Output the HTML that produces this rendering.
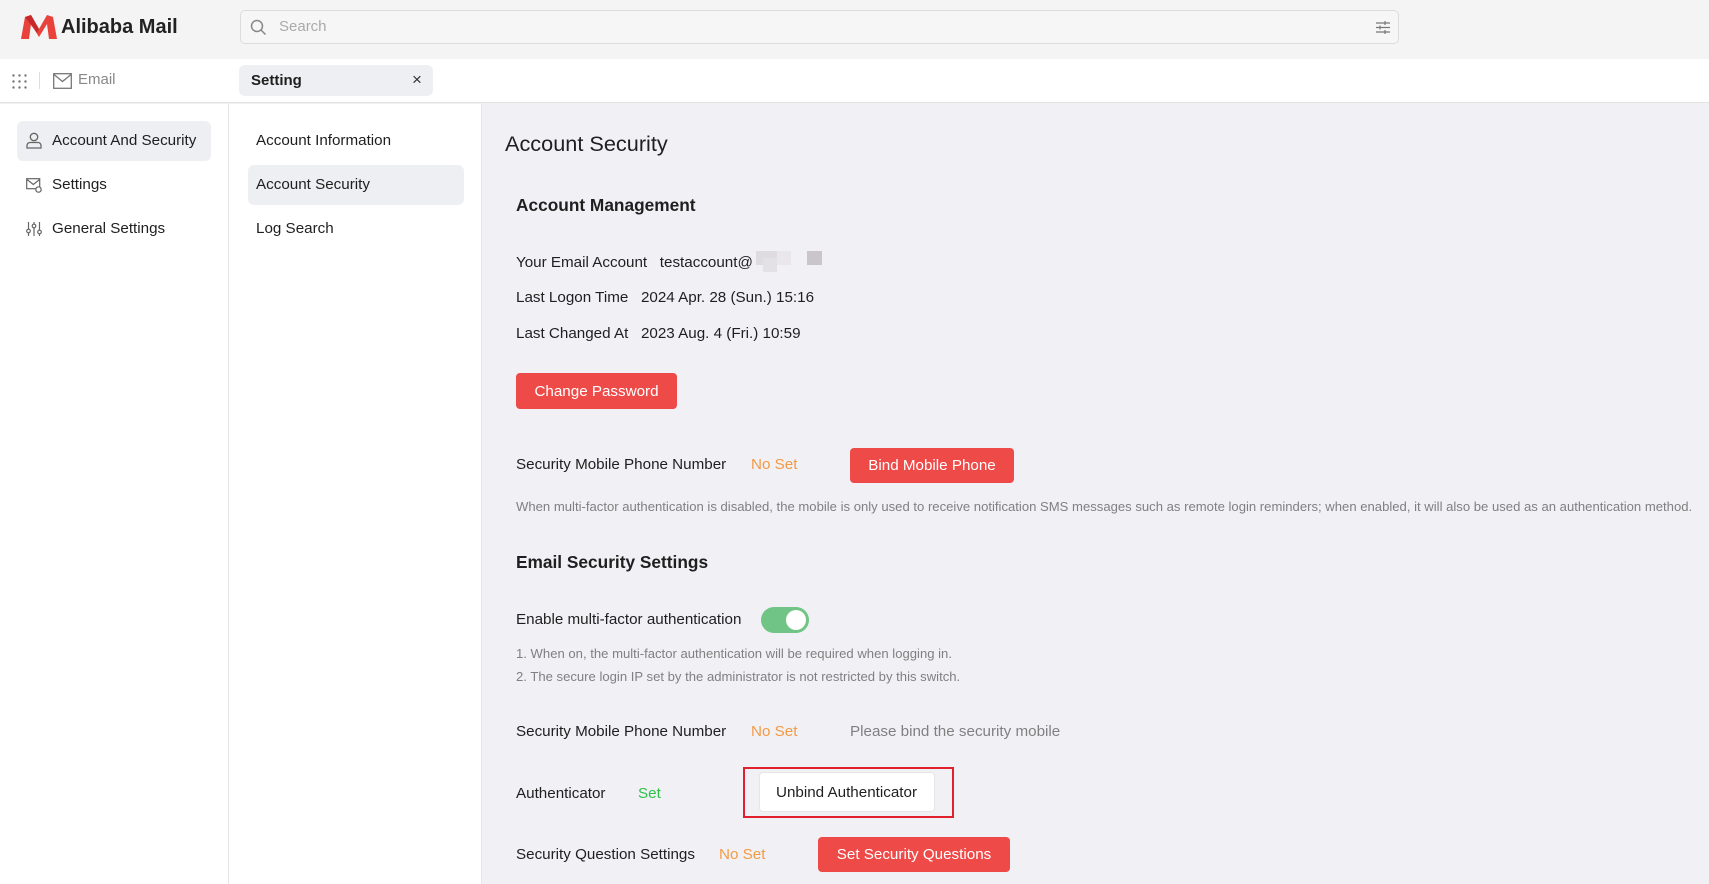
<!DOCTYPE html>
<html><head><meta charset="utf-8"><style>
*{box-sizing:border-box;margin:0;padding:0}
body{width:1709px;height:884px;overflow:hidden;font-family:"Liberation Sans",Arial,sans-serif;color:#1f1f1f;background:#f1f0f5;position:relative}
.a{position:absolute;white-space:nowrap}
.hdr{left:0;top:0;width:1709px;height:59px;background:#f4f4f4}
.tabs{left:0;top:59px;width:1709px;height:44px;background:#fff;border-bottom:1px solid #e3e3e3}
.side{left:0;top:104px;width:229px;height:780px;background:#fff;border-right:1px solid #e6e6e6}
.side2{left:229px;top:104px;width:253px;height:780px;background:#fff;border-right:1px solid #e6e6e6}
.t15{font-size:15.2px}
.btn{position:absolute;background:#ee4a48;color:#fff;font-size:15.2px;border-radius:4px;display:flex;align-items:center;justify-content:center;white-space:nowrap}
.or{color:#f39a45}
.gr{color:#808080}
</style></head><body>
<div class="a hdr"></div>
<svg class="a" style="left:21px;top:15px" width="36" height="25" viewBox="0 0 36 25"><path d="M0 24 L4 2 L10 0 L18 14 L26 0 L32 2 L36 24 L28 24 L26 9 L18 22 L10 9 L8 24 Z" fill="#e8423b"/><path d="M4 2 L10 0 L18 14 L16 18 Z" fill="#c8282a"/></svg>
<div class="a" style="left:61px;top:16px;font-size:20px;font-weight:bold;color:#222">Alibaba Mail</div>
<div class="a" style="left:240px;top:10px;width:1159px;height:34px;border:1px solid #dcdcdc;border-radius:5px;background:#f6f6f6"></div>
<svg class="a" style="left:250px;top:19px" width="17" height="17" viewBox="0 0 17 17"><circle cx="7" cy="7" r="5.5" fill="none" stroke="#888" stroke-width="1.5"/><path d="M11 11l4.5 4.5" stroke="#888" stroke-width="1.5"/></svg>
<div class="a" style="left:279px;top:18px;font-size:15px;color:#aaa">Search</div>
<svg class="a" style="left:1375px;top:20px" width="16" height="15" viewBox="0 0 16 15"><path d="M1 3h14M1 7.5h14M1 12h14M10 1v4M5 5.5v4M10 10v4" stroke="#777" stroke-width="1.2"/></svg>
<div class="a tabs"></div>
<svg class="a" style="left:12px;top:74px" width="15" height="15" viewBox="0 0 15 15" fill="#777"><circle cx="1.5" cy="1.5" r="1.2"/><circle cx="7.5" cy="1.5" r="1.2"/><circle cx="13.5" cy="1.5" r="1.2"/><circle cx="1.5" cy="7.5" r="1.2"/><circle cx="7.5" cy="7.5" r="1.2"/><circle cx="13.5" cy="7.5" r="1.2"/><circle cx="1.5" cy="13.5" r="1.2"/><circle cx="7.5" cy="13.5" r="1.2"/><circle cx="13.5" cy="13.5" r="1.2"/></svg>
<div class="a" style="left:39px;top:72px;width:1px;height:17px;background:#ddd"></div>
<svg class="a" style="left:53px;top:73px" width="19" height="16" viewBox="0 0 19 16"><rect x="0.7" y="0.7" width="17.6" height="14.6" fill="none" stroke="#777" stroke-width="1.3"/><path d="M1 1.5l8.5 7 8.5-7" fill="none" stroke="#777" stroke-width="1.3"/></svg>
<div class="a" style="left:78px;top:71px;font-size:15px;color:#888">Email</div>
<div class="a" style="left:239px;top:65px;width:194px;height:31px;background:#eeeff2;border-radius:6px"></div>
<div class="a" style="left:251px;top:72px;font-size:15px;font-weight:bold">Setting</div>
<div class="a" style="left:412px;top:70px;font-size:17px;color:#333">×</div>
<div class="a side"></div>
<div class="a side2"></div>
<div class="a" style="left:17px;top:121px;width:194px;height:40px;background:#eeeff2;border-radius:6px"></div>
<svg class="a" style="left:26px;top:132px" width="16" height="17" viewBox="0 0 16 17"><circle cx="8" cy="5" r="3.7" fill="none" stroke="#666" stroke-width="1.3"/><path d="M1 16v-2.5a3 3 0 0 1 3-3h8a3 3 0 0 1 3 3V16z" fill="none" stroke="#666" stroke-width="1.3"/></svg>
<div class="a t15" style="left:52px;top:132px">Account And Security</div>
<svg class="a" style="left:26px;top:178px" width="16" height="15" viewBox="0 0 16 15"><rect x="0.7" y="0.7" width="13" height="10" fill="none" stroke="#666" stroke-width="1.2"/><path d="M1 1.5l6.3 5 6.3-5" fill="none" stroke="#666" stroke-width="1.2"/><circle cx="12.5" cy="11.5" r="2.7" fill="#fff" stroke="#666" stroke-width="1.2"/></svg>
<div class="a t15" style="left:52px;top:176px">Settings</div>
<svg class="a" style="left:26px;top:221px" width="16" height="16" viewBox="0 0 16 16"><path d="M2.5 1v14M8 1v14M13.5 1v14" stroke="#666" stroke-width="1.2"/><circle cx="2.5" cy="10" r="1.8" fill="#fff" stroke="#666" stroke-width="1.2"/><circle cx="8" cy="5" r="1.8" fill="#fff" stroke="#666" stroke-width="1.2"/><circle cx="13.5" cy="11" r="1.8" fill="#fff" stroke="#666" stroke-width="1.2"/></svg>
<div class="a t15" style="left:52px;top:220px">General Settings</div>
<div class="a t15" style="left:256px;top:132px">Account Information</div>
<div class="a" style="left:248px;top:165px;width:216px;height:40px;background:#eeeff2;border-radius:6px"></div>
<div class="a t15" style="left:256px;top:176px">Account Security</div>
<div class="a t15" style="left:256px;top:220px">Log Search</div>

<div class="a" style="left:505px;top:131px;font-size:21.7px">Account Security</div>
<div class="a" style="left:516px;top:195px;font-size:17.3px;font-weight:bold">Account Management</div>
<div class="a t15" style="left:516px;top:254px">Your Email Account&nbsp;&nbsp; testaccount@</div>
<div class="a" style="left:756px;top:251px;width:21px;height:14px;background:#dedbe1"></div>
<div class="a" style="left:763px;top:258px;width:14px;height:14px;background:#e3e0e6"></div>
<div class="a" style="left:777px;top:251px;width:14px;height:14px;background:#e9e7ec"></div>
<div class="a" style="left:807px;top:251px;width:15px;height:14px;background:#c9c5cb"></div>
<div class="a t15" style="left:516px;top:289px">Last Logon Time&nbsp;&nbsp; 2024 Apr. 28 (Sun.) 15:16</div>
<div class="a t15" style="left:516px;top:325px">Last Changed At&nbsp;&nbsp; 2023 Aug. 4 (Fri.) 10:59</div>
<div class="btn" style="left:516px;top:373px;width:161px;height:36px">Change Password</div>
<div class="a t15" style="left:516px;top:456px">Security Mobile Phone Number</div>
<div class="a t15 or" style="left:751px;top:456px">No Set</div>
<div class="btn" style="left:850px;top:448px;width:164px;height:35px">Bind Mobile Phone</div>
<div class="a gr" style="left:516px;top:499px;font-size:13.1px">When multi-factor authentication is disabled, the mobile is only used to receive notification SMS messages such as remote login reminders; when enabled, it will also be used as an authentication method.</div>
<div class="a" style="left:516px;top:552px;font-size:17.3px;font-weight:bold">Email Security Settings</div>
<div class="a t15" style="left:516px;top:611px">Enable multi-factor authentication</div>
<div class="a" style="left:761px;top:607px;width:48px;height:26px;background:#6fc486;border-radius:13px"></div>
<div class="a" style="left:786px;top:610px;width:20px;height:20px;background:#fff;border-radius:50%"></div>
<div class="a gr" style="left:516px;top:646px;font-size:13.1px">1. When on, the multi-factor authentication will be required when logging in.</div>
<div class="a gr" style="left:516px;top:669px;font-size:13.1px">2. The secure login IP set by the administrator is not restricted by this switch.</div>
<div class="a t15" style="left:516px;top:723px">Security Mobile Phone Number</div>
<div class="a t15 or" style="left:751px;top:723px">No Set</div>
<div class="a t15 gr" style="left:850px;top:723px">Please bind the security mobile</div>
<div class="a t15" style="left:516px;top:785px">Authenticator</div>
<div class="a t15" style="left:638px;top:785px;color:#2fc24a">Set</div>
<div class="a" style="left:743px;top:767px;width:211px;height:51px;border:2px solid #e0212b"></div>
<div class="a" style="left:759px;top:772px;width:176px;height:40px;background:#fff;border:1px solid #e6e6e6;border-radius:4px"></div>
<div class="a t15" style="left:776px;top:784px">Unbind Authenticator</div>
<div class="a t15" style="left:516px;top:846px">Security Question Settings</div>
<div class="a t15 or" style="left:719px;top:846px">No Set</div>
<div class="btn" style="left:818px;top:837px;width:192px;height:35px">Set Security Questions</div>
</body></html>
